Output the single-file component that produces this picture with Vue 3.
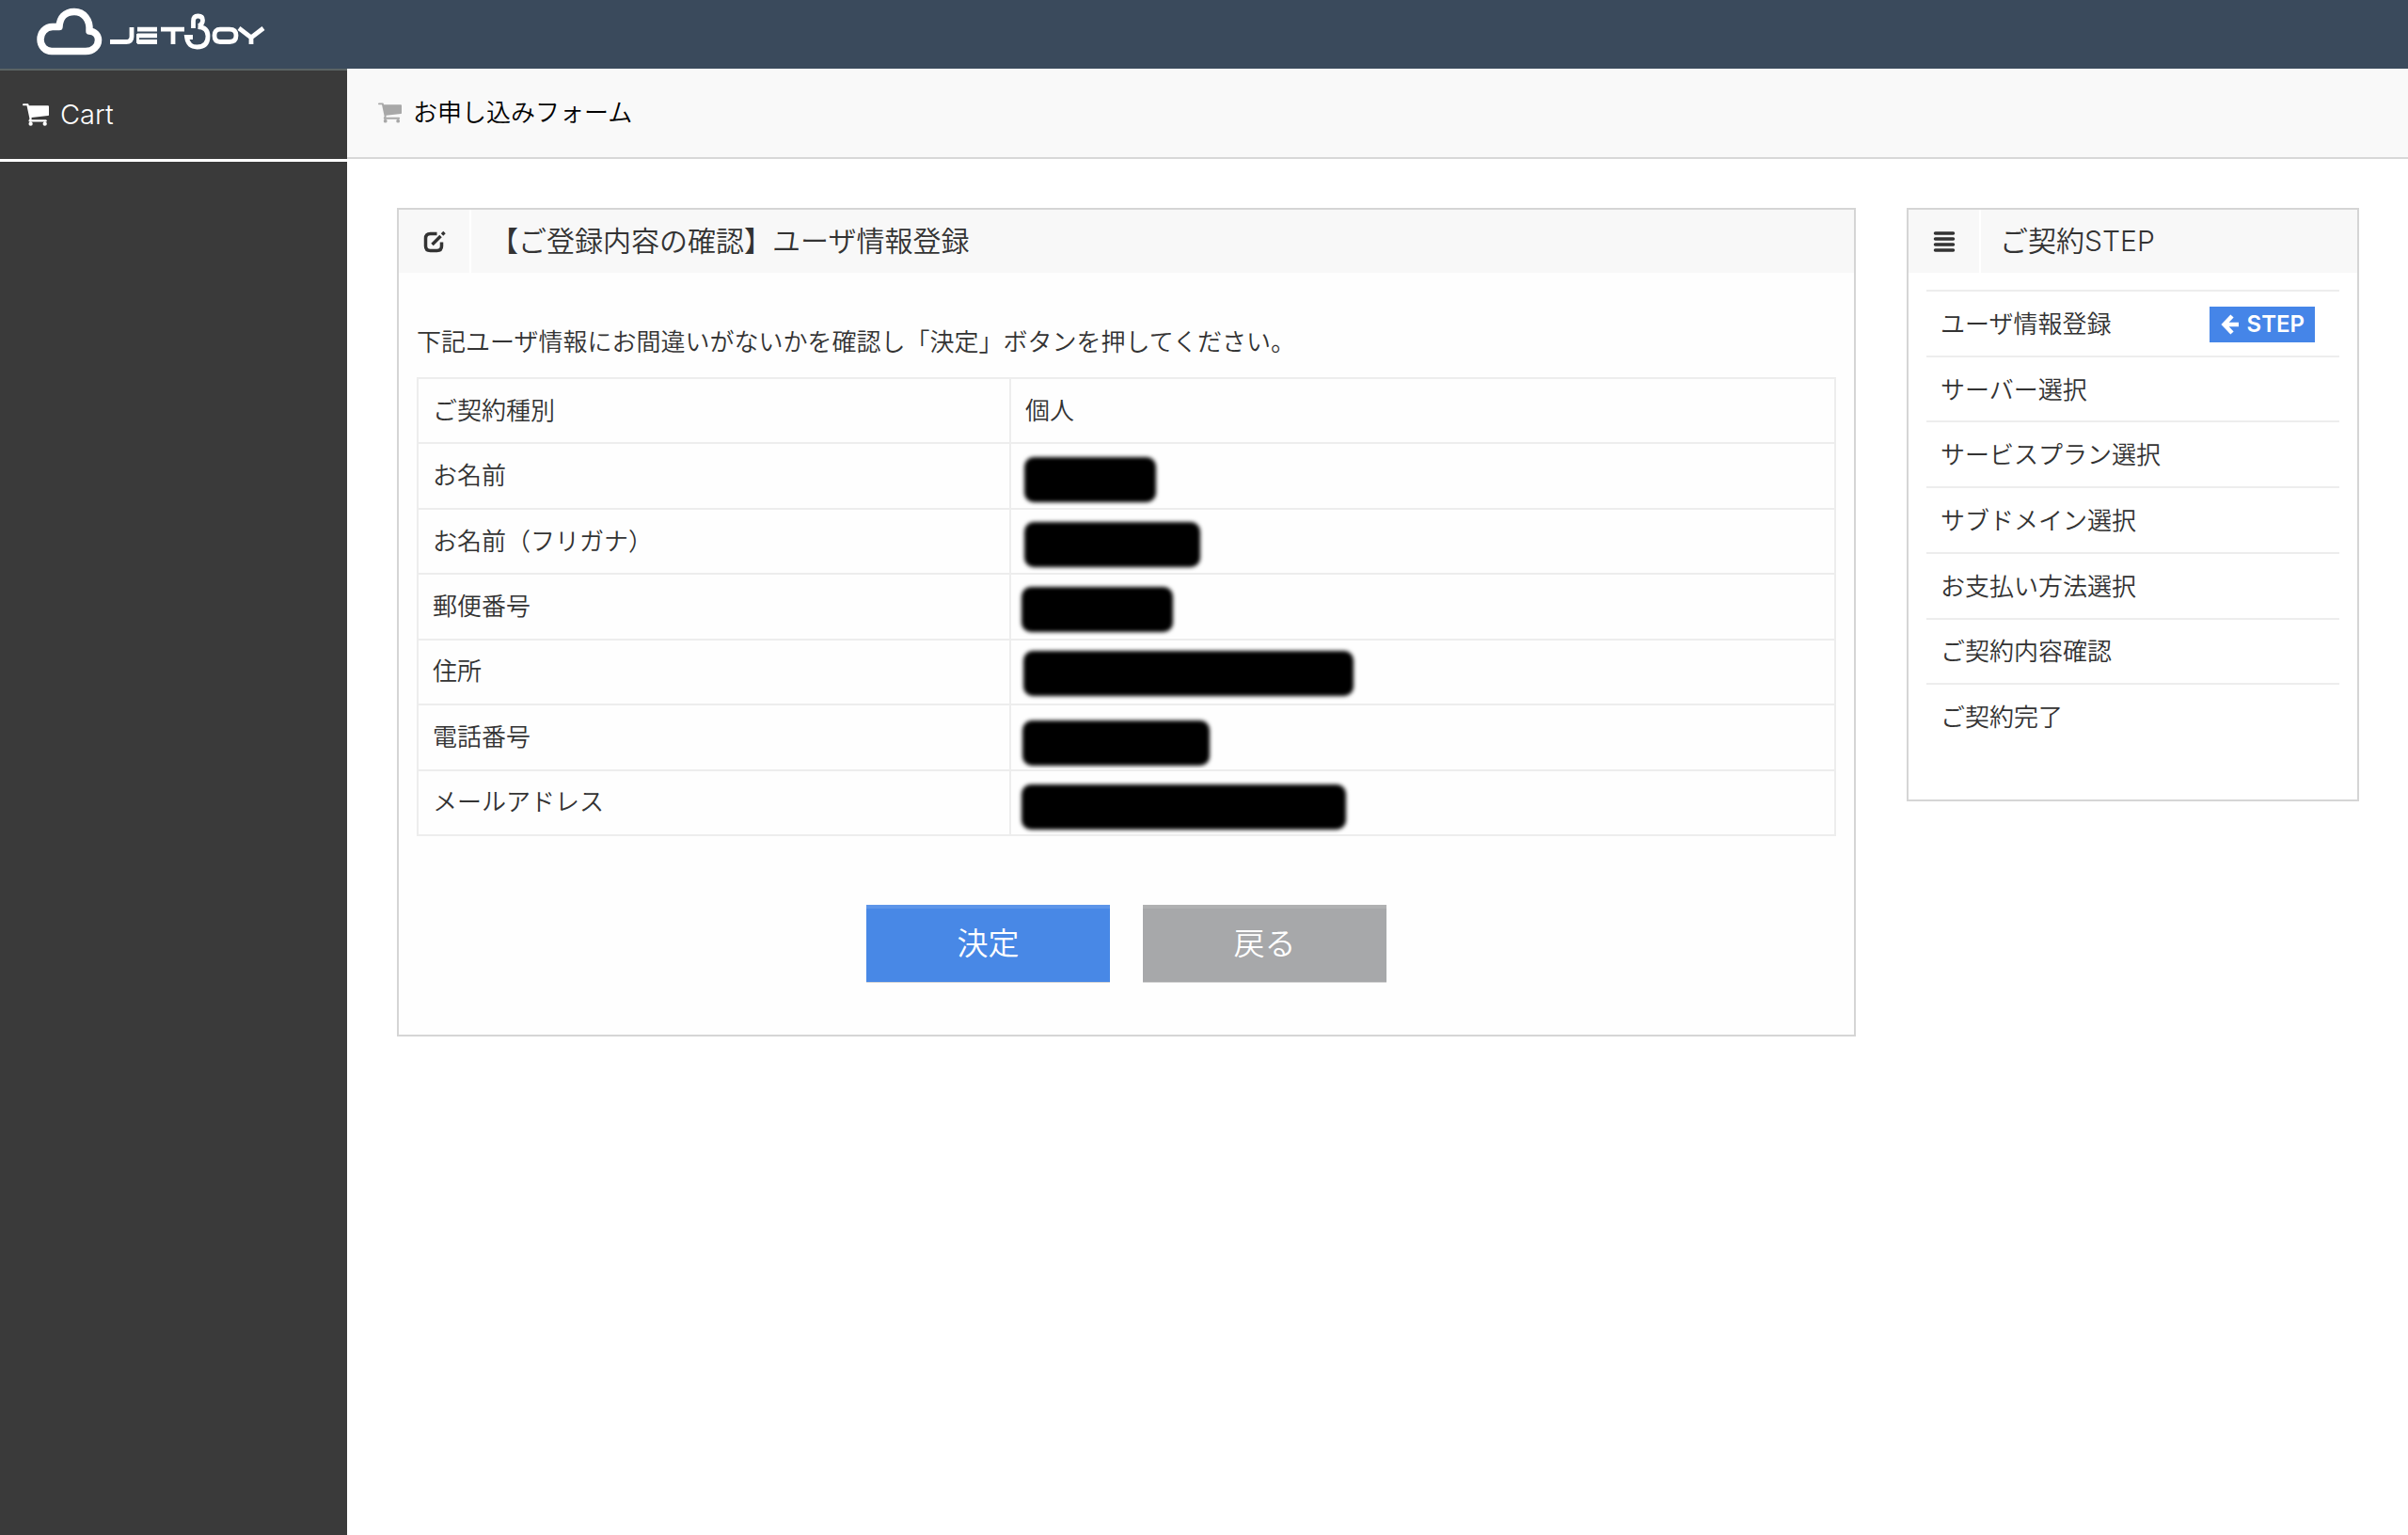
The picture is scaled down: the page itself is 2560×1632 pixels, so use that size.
<script setup>
const rows = [
  { label: 'ご契約種別', value: '個人' },
  { label: 'お名前', mark: { x: 14, y: 13, w: 140 } },
  { label: 'お名前（フリガナ）', mark: { x: 14, y: 13, w: 187 } },
  { label: '郵便番号', mark: { x: 11, y: 13, w: 161 } },
  { label: '住所', mark: { x: 13, y: 11, w: 351 } },
  { label: '電話番号', mark: { x: 12, y: 16, w: 199 } },
  { label: 'メールアドレス', mark: { x: 11, y: 14, w: 345 } },
]

const steps = [
  'ユーザ情報登録',
  'サーバー選択',
  'サービスプラン選択',
  'サブドメイン選択',
  'お支払い方法選択',
  'ご契約内容確認',
  'ご契約完了',
]
const currentStep = 0

const cartPath =
  'M640 1536a128 128 0 1 1-256 0a128 128 0 0 1 256 0zM1536 1536a128 128 0 1 1-256 0a128 128 0 0 1 256 0zM1664 448v512q0 24-16 42t-41 21l-1044 122q13 60 13 70q0 16-24 64h920q26 0 45 19t19 45t-19 45t-45 19H448q-26 0-45-19t-19-45q0-11 8-31t16-36t21-40t15-30L267 384H64q-26 0-45-19T0 320t19-45t45-19h256q16 0 28 6t20 16t13 24t8 26t5 29t5 26h1201q26 0 45 19t19 45z'
</script>

<template>
  <div class="page">
    <header class="brand-bar">
      <a href="#" class="logo" aria-label="JETBOY">
        <svg viewBox="0 0 256 70" width="256" height="70" fill="none" stroke="#fff">
          <path stroke-width="7.500" stroke-linejoin="round" d="M21 54.500H57C65 54.500 70.500 49 70.500 42.500C70.500 37 66.500 33.500 61 33C62 21 55 12.500 45 12.500C35 12.500 29.500 19 29 28.500H22C14 28.500 9 35 9 42C9 49 14 54.500 21 54.500Z" />
          <g stroke-width="4.800">
            <path d="M83 44.500H100Q106 44.500 106 39V29" />
            <path d="M133 31.200H112M133 37.800H112M133 44.500H112" />
            <path d="M112.500 36V46" stroke-width="3" />
            <path d="M137 31.200H162M150 31V47" />
            <path d="M171.500 30V22.500Q171.500 17 176.500 17Q181.500 17 181.500 21.500Q181.500 26 177 27.500M176.500 28.500Q187 29 187 38.500Q187 50 175.500 50Q166 50 164.500 39.500H171" />
            <path d="M200 31.200H210Q217 31.200 217 37.800Q217 44.500 210 44.500H200Q194 44.500 194 37.800Q194 31.200 200 31.200Z" />
            <path d="M220 30L233 40L246 30M233 38V47" />
          </g>
        </svg>
      </a>
    </header>

    <div class="body">
      <nav class="sidebar">
        <a href="#" class="nav-item">
          <svg class="cart" viewBox="0 256 1664 1408" fill="currentColor"><path :d="cartPath" /></svg>
          <span>Cart</span>
        </a>
      </nav>

      <main class="content">
        <div class="title-bar">
          <svg class="cart muted" viewBox="0 256 1664 1408" fill="currentColor"><path :d="cartPath" /></svg>
          <h1>お申し込みフォーム</h1>
        </div>

        <div class="columns">
          <div class="column">
            <section class="panel">
              <div class="panel-head">
                <span class="panel-icon">
                  <svg viewBox="0 0 24 24" width="24" height="24" fill="none" stroke="currentColor">
                    <path stroke-width="3.500" d="M14.500 3.500H7.500Q2.500 3.500 2.500 8.500V16.500Q2.500 21.500 7.500 21.500H14.500Q19.500 21.500 19.500 16.500V12.500" />
                    <path stroke-width="3.500" d="M9.500 15L18.500 6M20 4.500L22.500 2" />
                  </svg>
                </span>
                <h2>【ご登録内容の確認】ユーザ情報登録</h2>
              </div>
              <div class="panel-body">
                <p class="lead">下記ユーザ情報にお間違いがないかを確認し「決定」ボタンを押してください。</p>
                <table>
                  <tbody>
                    <tr v-for="row in rows" :key="row.label">
                      <th scope="row">{{ row.label }}</th>
                      <td v-if="row.value">{{ row.value }}</td>
                      <td v-else class="masked">
                        <svg width="400" height="67">
                          <rect :x="row.mark.x" :y="row.mark.y" :width="row.mark.w" height="48" rx="10" />
                        </svg>
                      </td>
                    </tr>
                  </tbody>
                </table>
                <div class="actions">
                  <button type="submit" class="btn primary">決定</button>
                  <button type="button" class="btn">戻る</button>
                </div>
              </div>
            </section>
          </div>

          <div class="column">
            <section class="panel">
              <div class="panel-head">
                <span class="panel-icon">
                  <svg viewBox="0 0 24 24" width="24" height="24" fill="none" stroke="currentColor" stroke-width="3.500" stroke-linecap="round">
                    <path d="M2.500 3H21.500M2.500 9H21.500M2.500 15H21.500M2.500 21H21.500" />
                  </svg>
                </span>
                <h2>ご契約STEP</h2>
              </div>
              <ol class="steps">
                <li v-for="(step, i) in steps" :key="step">
                  <span>{{ step }}</span>
                  <span v-if="i === currentStep" class="badge">
                    <svg viewBox="0 0 20 22" width="20" height="22" fill="none" stroke="currentColor" stroke-width="4.500">
                      <path d="M12 2L3.500 11L12 20M4 11H19" />
                    </svg>
                    STEP
                  </span>
                </li>
              </ol>
            </section>
          </div>
        </div>
      </main>
    </div>
  </div>
</template>

<style>
body {
  margin: 0;
  background: #fff;
}
</style>

<style scoped>
.page {
  display: flex;
  flex-direction: column;
  min-height: 100vh;
  font-family: Inter, "Noto Sans CJK JP", sans-serif;
  font-size: 26px;
  font-weight: 350;
  line-height: 40px;
  color: #333;
}

h1,
h2,
p,
ol {
  margin: 0;
  padding: 0;
  font-weight: inherit;
}

svg {
  display: block;
}

.brand-bar {
  height: 73px;
  padding-left: 34px;
  background: #3a4a5c;
}

.logo {
  display: inline-block;
}

.body {
  display: flex;
  flex: 1;
}

.sidebar {
  width: 369px;
  flex: none;
  background: #3a3a3a;
}

.nav-item {
  display: flex;
  align-items: center;
  gap: 12px;
  box-sizing: border-box;
  height: 99px;
  padding-left: 24px;
  border-top: 2px solid #5a6364;
  border-bottom: 3px solid #fff;
  color: #fff;
  font-size: 29px;
  font-weight: 300;
  text-decoration: none;
}

.cart {
  width: 28px;
  height: 24px;
}

.muted {
  width: 25px;
  height: 22px;
  color: #a8a8a8;
}

.content {
  flex: 1;
  min-width: 0;
}

.title-bar {
  display: flex;
  align-items: center;
  gap: 12px;
  box-sizing: border-box;
  height: 96px;
  padding-left: 33px;
  border-bottom: 2px solid #d8d8d8;
  background: #f9f9f9;
  color: #000;
}

h1 {
  font-size: 26px;
}

.columns {
  display: grid;
  grid-template-columns: minmax(0, 3fr) minmax(0, 1fr);
  align-items: start;
  padding: 52px 25px 52px 26px;
}

.column {
  padding: 0 27px;
}

.panel {
  border: 2px solid #d5d5d5;
}

.panel-head {
  display: flex;
  height: 67px;
  background: #f8f8f8;
}

.panel-icon {
  display: flex;
  align-items: center;
  justify-content: center;
  width: 75px;
  border-right: 2px solid #fff;
}

h2 {
  padding-left: 20px;
  font-size: 30px;
  line-height: 67px;
}

.panel-body {
  padding: 54px 19px 55px;
  background: #fefefe;
}

.lead {
  margin-bottom: 17px;
}

table {
  width: 100%;
  height: 488px;
  border-collapse: collapse;
  table-layout: fixed;
}

tr {
  height: 69px;
}

th,
td {
  padding: 0 15px;
  border: 2px solid #ededed;
  font-weight: inherit;
  text-align: left;
}

th {
  width: 630px;
  box-sizing: border-box;
}

.masked {
  padding: 0;
}

.masked rect {
  fill: #000;
  filter: blur(2px);
}

.actions {
  display: flex;
  justify-content: center;
  gap: 35px;
  margin-top: 73px;
}

.btn {
  width: 259px;
  height: 83px;
  padding: 0;
  border: 0;
  border-bottom: 1px solid #d8d8d8;
  background: #a7a8aa;
  box-shadow: inset 0 4px 0 #b0b1b2;
  color: #fff;
  font: inherit;
  font-size: 33px;
}

.primary {
  background: #4888e6;
  box-shadow: inset 0 4px 0 #5d95e9;
}

.steps {
  display: flex;
  flex-direction: column;
  height: 488px;
  margin: 18px 19px 54px;
  list-style: none;
}

.steps li {
  display: flex;
  flex: 1 1 auto;
  align-items: center;
  justify-content: space-between;
  padding: 14px 26px 12px 15px;
  border-top: 2px solid #ededed;
}

.badge {
  display: flex;
  align-items: center;
  gap: 8px;
  padding: 0 11px 0 12px;
  background: #4585e8;
  color: #fff;
  font-size: 24px;
  font-weight: 600;
  line-height: 38px;
}
</style>
